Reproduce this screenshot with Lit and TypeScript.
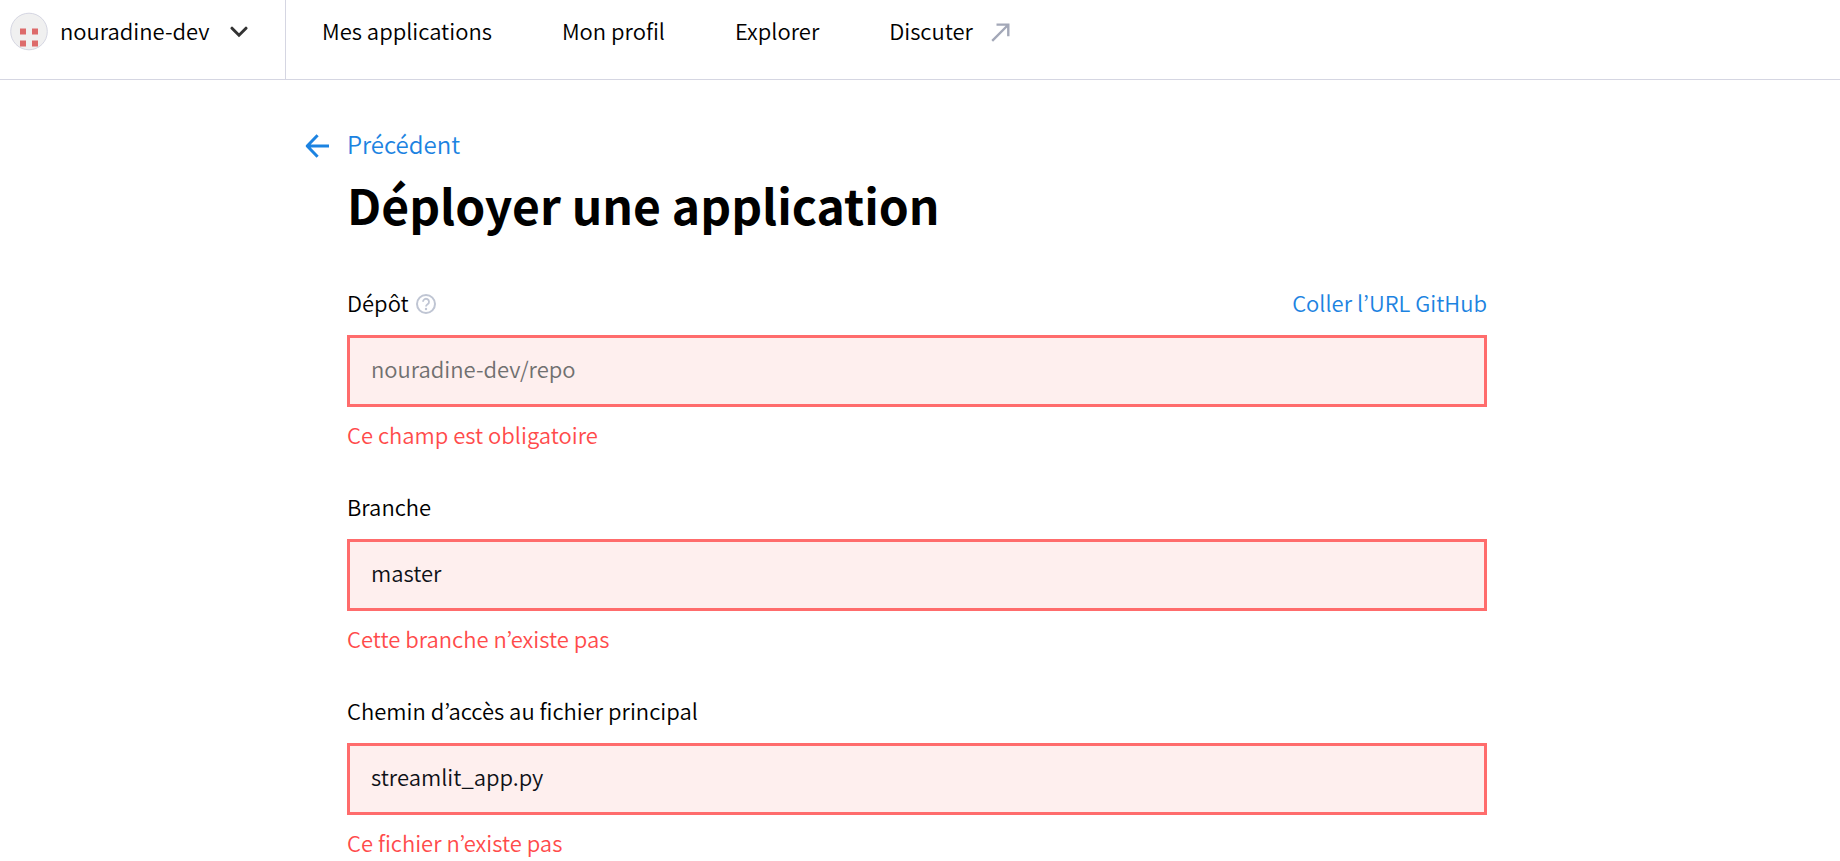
import { LitElement, html, css, svg } from "lit";
import { customElement, property, state } from "lit/decorators.js";

const ARROW_LEFT = svg`<path d="M12.6 1.2 2.2 12l10.4 10.8M2.2 12H24" fill="none" stroke="currentColor" stroke-width="3" stroke-linejoin="round"/>`;

@customElement("top-bar")
export class TopBar extends LitElement {
  @property() user = "";

  static styles = css`
    :host {
      display: block;
    }
    .bar {
      display: flex;
      height: 79px;
      border-bottom: 1px solid #d5d6e2;
    }
    .account {
      display: flex;
      align-items: flex-start;
      box-sizing: border-box;
      width: 286px;
      padding: 14px 37px 0 10px;
      border: 0;
      border-right: 1px solid #d5d6e2;
      background: none;
      color: #000;
      font: inherit;
      text-align: left;
      cursor: pointer;
    }
    .avatar {
      flex: none;
      width: 38px;
      height: 38px;
      margin-right: 12px;
      overflow: visible;
    }
    .name {
      flex: 1;
    }
    .chevron {
      flex: none;
      width: 18px;
      height: 12px;
      margin-top: 12px;
    }
    .links {
      display: flex;
      align-items: flex-start;
      gap: 70px;
      padding: 14px 36px 0;
    }
    .link {
      display: flex;
      align-items: center;
      gap: 18px;
      color: #000;
      text-decoration: none;
    }
    .external {
      width: 19px;
      height: 19px;
      padding-top: 4px;
      color: #a3a8b8;
    }
  `;

  render() {
    return html`
      <header class="bar">
        <button class="account" type="button">
          <svg class="avatar" viewBox="0 0 38 38" aria-hidden="true">
            <circle cx="19" cy="17.5" r="18.3" fill="#f0f0f0" stroke="#d5d6e2" />
            <path d="M10 14.5h6v6h-6zM22 14.5h6v6h-6zM10 26.5h6v6h-6zM22 26.5h6v6h-6z" fill="#dd6b6b" />
          </svg>
          <span class="name">${this.user}</span>
          <svg class="chevron" viewBox="0 0 18 12" aria-hidden="true">
            <path d="M2 2.2 9 9.2l7-7" fill="none" stroke="#333" stroke-width="3" stroke-linecap="round" />
          </svg>
        </button>
        <nav class="links">
          <a class="link" href="#apps">Mes applications</a>
          <a class="link" href="#profil">Mon profil</a>
          <a class="link" href="#explorer">Explorer</a>
          <a class="link" href="#discuter">
            Discuter
            <svg class="external" viewBox="0 0 19 19" aria-hidden="true">
              <path d="M1.2 17.8 17 2M5.5 1.6h11.8v11.6" fill="none" stroke="currentColor" stroke-width="2.4" />
            </svg>
          </a>
        </nav>
      </header>
    `;
  }
}

@customElement("form-field")
export class FormField extends LitElement {
  @property() name = "";
  @property() label = "";
  @property() value = "";
  @property() placeholder = "";
  @property() error = "";
  @property({ type: Boolean }) help = false;
  @property() action = "";

  static styles = css`
    :host {
      display: block;
    }
    .head {
      display: flex;
      align-items: center;
      margin-bottom: 17px;
    }
    .help {
      display: flex;
      margin-left: 7px;
      padding: 4px 0 0;
      border: 0;
      background: none;
      color: #bfc5d3;
    }
    .help-icon {
      width: 20px;
      height: 20px;
    }
    .action {
      margin-left: auto;
      color: #1c83e1;
      text-decoration: none;
    }
    .input {
      display: block;
      box-sizing: border-box;
      width: 100%;
      height: 72px;
      padding: 0 21px 6px;
      border: 3px solid #ff6c6c;
      border-radius: 0;
      outline: 0;
      background: #feefee;
      color: #0e1117;
      font: inherit;
    }
    .input::placeholder {
      color: #707070;
    }
    .error {
      margin: 11px 0 0;
      color: #ff4b4b;
    }
  `;

  render() {
    return html`
      <div class="head">
        <label for=${this.name}>${this.label}</label>
        ${this.help
          ? html`<button class="help" type="button" aria-label="Aide">
              <svg class="help-icon" viewBox="0 0 20 20" aria-hidden="true">
                <circle cx="10" cy="10" r="9" fill="none" stroke="currentColor" stroke-width="2" />
                <path d="M7 7.8a3 3 0 1 1 4.6 2.5c-1 .7-1.6 1.2-1.6 2.2" fill="none" stroke="currentColor" stroke-width="1.8" />
                <circle cx="10" cy="15" r="1.2" fill="currentColor" />
              </svg>
            </button>`
          : null}
        ${this.action ? html`<a class="action" href="#url">${this.action}</a>` : null}
      </div>
      <input
        class="input"
        id=${this.name}
        type="text"
        .value=${this.value}
        placeholder=${this.placeholder}
        aria-invalid="true"
        aria-describedby="error"
      />
      <p class="error" id="error">${this.error}</p>
    `;
  }
}

@customElement("app-root")
export class AppRoot extends LitElement {
  @state() private fields = [
    {
      name: "repo",
      label: "Dépôt",
      value: "",
      placeholder: "nouradine-dev/repo",
      error: "Ce champ est obligatoire",
      help: true,
      action: "Coller l’URL GitHub",
    },
    { name: "branch", label: "Branche", value: "master", error: "Cette branche n’existe pas" },
    {
      name: "path",
      label: "Chemin d’accès au fichier principal",
      value: "streamlit_app.py",
      error: "Ce fichier n’existe pas",
    },
  ];

  static styles = css`
    :host {
      display: block;
      background: #fff;
      color: #000;
      font: 350 22px/32px "Noto Sans CJK KR", "Open Sans", sans-serif;
    }
    .page {
      padding: 46px 54px 0 48px;
    }
    .column {
      max-width: 1140px;
      margin: 0 auto;
    }
    .back {
      display: flex;
      align-items: center;
      gap: 18px;
      width: max-content;
      margin-left: -42px;
      color: #1c83e1;
      font-size: 24px;
      line-height: 36px;
      text-decoration: none;
    }
    .back-icon {
      width: 24px;
      height: 24px;
      padding-top: 4px;
    }
    .title {
      margin: 6px 0 46px;
      font-size: 48px;
      line-height: 72px;
      font-weight: 700;
    }
    .form {
      display: grid;
      gap: 40px;
    }
  `;

  render() {
    return html`
      <top-bar user="nouradine-dev"></top-bar>
      <main class="page">
        <div class="column">
          <a class="back" href="#retour">
            <svg class="back-icon" viewBox="0 0 24 24" aria-hidden="true">${ARROW_LEFT}</svg>
            Précédent
          </a>
          <h1 class="title">Déployer une application</h1>
          <form class="form">
            ${this.fields.map(
              (f) => html`<form-field
                .name=${f.name}
                .label=${f.label}
                .value=${f.value}
                .placeholder=${f.placeholder ?? ""}
                .error=${f.error}
                .help=${f.help ?? false}
                .action=${f.action ?? ""}
              ></form-field>`,
            )}
          </form>
        </div>
      </main>
    `;
  }
}
